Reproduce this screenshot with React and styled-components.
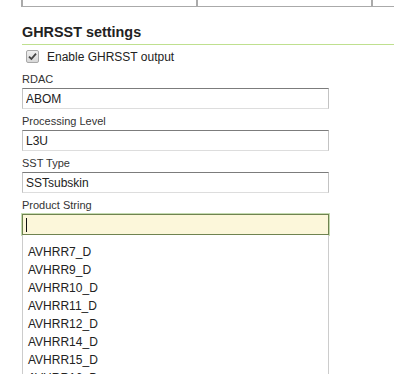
import React from "react";
import styled, { createGlobalStyle } from "styled-components";

const GlobalStyle = createGlobalStyle`
  html, body {
    margin: 0;
    padding: 0;
    background: #fff;
    overflow: hidden;
  }
  body {
    font-family: "Liberation Sans", Arial, sans-serif;
    color: #222;
  }
`;

const products = [
  "AVHRR7_D",
  "AVHRR9_D",
  "AVHRR10_D",
  "AVHRR11_D",
  "AVHRR12_D",
  "AVHRR14_D",
  "AVHRR15_D",
  "AVHRR16_D",
  "AVHRR17_D",
];

const App = () => {
  return (
    <>
      <GlobalStyle />
      <Page>
        <TableEdge>
          <Cell />
          <Cell />
          <Cell />
        </TableEdge>

        <Heading>GHRSST settings</Heading>

        <CheckRow>
          <Check>
            <svg width="9" height="9" viewBox="0 0 9 9">
              <path d="M1 4.6 L3.4 7 L8 1.6" fill="none" stroke="#444" strokeWidth="1.8" />
            </svg>
          </Check>
          <span>Enable GHRSST output</span>
        </CheckRow>

        <Field>
          <Label>RDAC</Label>
          <Input readOnly value="ABOM" />
        </Field>
        <Field>
          <Label>Processing Level</Label>
          <Input readOnly value="L3U" />
        </Field>
        <Field>
          <Label>SST Type</Label>
          <Input readOnly value="SSTsubskin" />
        </Field>
        <Field>
          <Label>Product String</Label>
          <FocusedInput>
            <Caret />
          </FocusedInput>
          <Menu>
            {products.map((p) => (
              <MenuItem key={p}>{p}</MenuItem>
            ))}
          </Menu>
        </Field>
      </Page>
    </>
  );
};

const Page = styled.div`
  padding-left: 22px;
  height: 374px;
  overflow: hidden;
`;

const TableEdge = styled.div`
  display: flex;
  height: 6px;
  border-left: 2px solid #aaa;
  border-bottom: 1px solid #aaa;
  margin-left: -1px;
`;

const Cell = styled.div`
  flex: 0 0 173px;
  border-right: 2px solid #aaa;
`;

const Heading = styled.h3`
  margin: 16px 0 0;
  padding: 0 0 3px;
  font-size: 14.4px;
  line-height: 18px;
  font-weight: bold;
  color: #222;
  border-bottom: 1px solid #bfe08f;
`;

const CheckRow = styled.label`
  display: flex;
  align-items: center;
  gap: 8px;
  height: 13px;
  margin: 5px 0 9px 4px;
  font-size: 12px;
  color: #222;
`;

const Check = styled.span`
  display: flex;
  align-items: center;
  justify-content: center;
  width: 11px;
  height: 11px;
  border: 1px solid #a8a8a8;
  border-radius: 2px;
  background: linear-gradient(#f0f0f0, #d8d8d8);
`;

const Field = styled.div`
  display: flex;
  flex-direction: column;
  margin-bottom: 5px;
`;

const Label = styled.div`
  font-size: 11px;
  line-height: 14px;
  margin-bottom: 2px;
  color: #333;
`;

const Input = styled.input`
  box-sizing: border-box;
  width: 307px;
  height: 21px;
  margin: 0;
  padding: 0 3px;
  font-family: "Liberation Sans", Arial, sans-serif;
  font-size: 12px;
  color: #222;
  background: #fff;
  border: 1px solid;
  border-color: #7c7c7c #c3c3c3 #ddd #c3c3c3;
  border-radius: 0;
  outline: none;
`;

const FocusedInput = styled.div`
  box-sizing: border-box;
  display: flex;
  align-items: center;
  width: 307px;
  height: 21px;
  padding: 0 3px;
  background: #fcf7da;
  border: 1px solid #6f8350;
  box-shadow: 0 0 0 1px #c5dbb0;
`;

const Caret = styled.span`
  width: 1px;
  height: 14px;
  background: #111;
`;

const Menu = styled.ul`
  box-sizing: border-box;
  width: 307px;
  margin: 0;
  padding: 8px 0 0;
  list-style: none;
  border: 1px solid #ccc;
  border-top: none;
  background: #fff;
`;

const MenuItem = styled.li`
  padding-left: 5px;
  font-size: 12px;
  line-height: 18px;
  color: #222;
`;

export default App;
